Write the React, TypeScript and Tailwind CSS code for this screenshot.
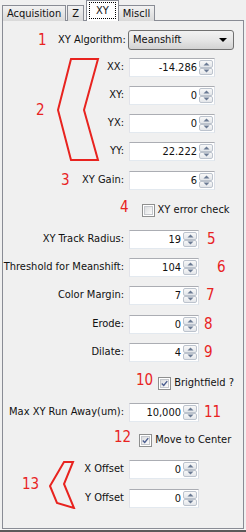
import React from 'react'

function Arrow({ up }: { up?: boolean }) {
  return (
    <svg width="7" height="4" viewBox="0 0 7 4" className="block">
      <path d={up ? 'M0.5 3.5 L3.5 0.5 L6.5 3.5 Z' : 'M0.5 0.5 L3.5 3.5 L6.5 0.5 Z'} fill="#6a7a93" />
    </svg>
  )
}

function SpinBtn({ up }: { up?: boolean }) {
  return (
    <div className="flex-1 flex items-center justify-center border border-[#bcc3cd] rounded-[2px] bg-gradient-to-b from-[#f8f8f8] to-[#e3e6ea]">
      <Arrow up={up} />
    </div>
  )
}

function Spin({ value, long }: { value: string; long?: boolean }) {
  return (
    <div
      className={`${long ? 'w-[86px]' : 'w-[70px]'} h-[19px] flex bg-white border border-[#abadb3] border-r-[#dbdfe6] border-b-[#e3e9ef] border-l-[#e2e3ea]`}
    >
      <div className="flex-1 text-right pr-[2px] leading-[17px]">{value}</div>
      <div className="w-[15px] flex flex-col py-px pr-px">
        <SpinBtn up />
        <SpinBtn />
      </div>
    </div>
  )
}

function Row({
  label,
  value,
  long,
  note,
  noteGap,
  labelW = 'w-[121px]',
  mt,
}: {
  label: string
  value: string
  long?: boolean
  note?: string
  noteGap?: string
  labelW?: string
  mt: string
}) {
  return (
    <div className={`flex items-center h-[19px] ${mt}`}>
      <div className={`${labelW} text-right whitespace-nowrap`}>{label}</div>
      <div className="ml-[5px]">
        <Spin value={value} long={long} />
      </div>
      {note && <span className={`text-[#e8231f] text-[15px] leading-none ${noteGap}`}>{note}</span>}
    </div>
  )
}

function Check({ checked }: { checked?: boolean }) {
  return (
    <div className="w-[13px] h-[13px] border border-[#8e8f8f] bg-white p-px">
      <div className="w-full h-full border border-[#c4c7cc] bg-gradient-to-br from-[#dcdddf] to-[#fbfbfb] flex items-center justify-center">
        {checked && (
          <svg width="9" height="9" viewBox="0 0 9 9">
            <path d="M1 4.5 L3.5 7 L8 1.5" stroke="#4a5d8f" strokeWidth="1.8" fill="none" />
          </svg>
        )}
      </div>
    </div>
  )
}

function CheckRow({
  note,
  label,
  checked,
  ml,
  gap,
  mt,
}: {
  note: string
  label: string
  checked?: boolean
  ml: string
  gap: string
  mt: string
}) {
  return (
    <div className={`flex items-center h-[19px] ${mt} ${ml}`}>
      <span className="text-[#e8231f] text-[15px] leading-none -mt-[6px]">{note}</span>
      <div className={gap}>
        <Check checked={checked} />
      </div>
      <span className="ml-[3px] whitespace-nowrap">{label}</span>
    </div>
  )
}

function Tab({ label, selected }: { label: string; selected?: boolean }) {
  if (selected) {
    return (
      <div className="h-[21px] -mx-px z-10 relative bg-white border border-b-0 border-[#898c95] px-[2px] pt-px">
        <div className="border border-dotted border-black px-[6px] leading-[15px]">{label}</div>
      </div>
    )
  }
  return (
    <div className="h-[16px] border border-b-0 border-[#898c95] bg-gradient-to-b from-[#f2f2f2] to-[#d9d9d9] px-[4px] leading-[15px]">
      {label}
    </div>
  )
}

export default function App() {
  return (
    <div className="w-[246px] h-[532px] bg-[#f0f0f0] text-[11px] text-[#111] font-['DejaVu_Sans_Condensed','Liberation_Sans',sans-serif] overflow-hidden">
      {/* tabs */}
      <div className="h-[21px] flex items-end pl-[2px]">
        <Tab label="Acquisition" />
        <div className="w-px" />
        <Tab label="Z" />
        <div className="w-[3px]" />
        <Tab label="XY" selected />
        <Tab label="Miscll" />
      </div>

      {/* panel */}
      <div className="mx-[2px] -mt-px h-[509px] border border-[#898c95] bg-[#f0f0f0]">
        <div className="flex items-center h-[20px] mt-[9px]">
          <span className="ml-[35px] w-[20px] text-[#e8231f] text-[15px] leading-none">1</span>
          <span className="w-[66px] text-right whitespace-nowrap">XY Algorithm:</span>
          <div className="ml-[4px] w-[106px] h-[20px] flex items-center border border-[#707070] rounded-[3px] bg-gradient-to-b from-[#f2f2f2] via-[#e6e6e6] to-[#d2d2d2] pl-[4px] pr-[6px]">
            <span className="flex-1">Meanshift</span>
            <svg width="8" height="4" viewBox="0 0 8 4">
              <path d="M0 0 L8 0 L4 4 Z" fill="#000" />
            </svg>
          </div>
        </div>

        {/* group 2 */}
        <div className="flex mt-[8px]">
          <div className="w-[97px] flex items-center">
            <span className="ml-[33px] text-[#e8231f] text-[15px] leading-none">2</span>
            <svg width="44" height="105" viewBox="0 0 44 105" className="ml-[11px] -mt-px">
              <polygon points="15,2 42,2 28,53 42,103 15,103 2,53" fill="none" stroke="#e8231f" strokeWidth="2" />
            </svg>
          </div>
          <div className="flex flex-col">
            <Row label="XX:" value="-14.286" long labelW="w-[24px]" mt="mt-0" />
            <Row label="XY:" value="0" long labelW="w-[24px]" mt="mt-[9px]" />
            <Row label="YX:" value="0" long labelW="w-[24px]" mt="mt-[9px]" />
            <Row label="YY:" value="22.222" long labelW="w-[24px]" mt="mt-[9px]" />
          </div>
        </div>

        <div className="flex items-center h-[19px] mt-[9px]">
          <span className="ml-[58px] w-[20px] text-[#e8231f] text-[15px] leading-none">3</span>
          <span className="w-[43px] text-right whitespace-nowrap">XY Gain:</span>
          <div className="ml-[5px]">
            <Spin value="6" long />
          </div>
        </div>

        <CheckRow note="4" label="XY error check" ml="ml-[117px]" gap="ml-[13px]" mt="mt-[11px]" />

        <Row label="XY Track Radius:" value="19" note="5" noteGap="ml-[8px]" mt="mt-[10px]" />
        <Row label="Threshold for Meanshift:" value="104" note="6" noteGap="ml-[18px]" mt="mt-[9px]" />
        <Row label="Color Margin:" value="7" note="7" noteGap="ml-[7px]" mt="mt-[9px]" />
        <Row label="Erode:" value="0" note="8" noteGap="ml-[5px]" mt="mt-[10px]" />
        <Row label="Dilate:" value="4" note="9" noteGap="ml-[5px]" mt="mt-[9px]" />

        <CheckRow note="10" label="Brightfield ?" checked ml="ml-[133px]" gap="ml-[5px]" mt="mt-[12px]" />

        <Row label="Max XY Run Away(um):" value="10,000" note="11" noteGap="ml-[5px]" mt="mt-[10px]" />

        <CheckRow note="12" label="Move to Center" checked ml="ml-[111px]" gap="ml-[8px]" mt="mt-[9px]" />

        {/* group 13 */}
        <div className="flex mt-[10px]">
          <div className="w-[80px] flex items-center">
            <span className="ml-[19px] text-[#e8231f] text-[15px] leading-none">13</span>
            <svg width="27" height="48" viewBox="0 0 27 48" className="ml-[10px] mt-[1px]">
              <polygon points="15,1 24,1 15,23 25,47 8,42 1,25" fill="none" stroke="#e8231f" strokeWidth="2" />
            </svg>
          </div>
          <div className="flex flex-col">
            <Row label="X Offset" value="0" labelW="w-[41px]" mt="mt-0" />
            <Row label="Y Offset" value="0" labelW="w-[41px]" mt="mt-[10px]" />
          </div>
        </div>
      </div>
      <div className="h-px bg-[#f7f7f7]" />
      <div className="h-[2px] bg-[#5a5a5a]" />
    </div>
  )
}
